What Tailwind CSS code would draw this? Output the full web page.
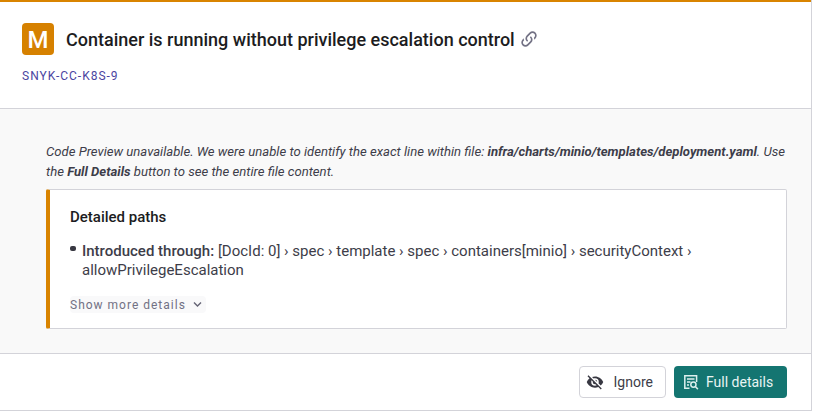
<!DOCTYPE html>
<html lang="en">
<head>
<meta charset="utf-8">
<title>Issue details</title>
<script src="https://cdn.jsdelivr.net/npm/@tailwindcss/browser@4"></script>
</head>
<body class="bg-white font-['Roboto',sans-serif] text-[#3d3d49] antialiased">
<article class="flex h-[411px] w-[812px] flex-col border-r border-b border-[#d3d3d9]">
  <header class="h-[109px] border-t-2 border-b border-t-[#d98400] border-b-[#d3d3d9] pt-[21px] pl-[22px]">
    <div class="flex h-8 items-center">
      <span class="flex size-8 items-center justify-center rounded bg-[#d68100] pt-0.5 text-[24px] leading-8 font-medium text-white">M</span>
      <h1 class="ml-3 pt-0.5 text-[18px] leading-8 font-medium whitespace-nowrap text-[#1c1c21]">Container is running without privilege escalation control</h1>
      <svg class="ml-[4px] size-5" viewBox="0 0 24 24" fill="#727184"><path d="M10.59,13.41C11,13.8 11,14.44 10.59,14.83C10.2,15.22 9.56,15.22 9.17,14.83C7.22,12.88 7.22,9.71 9.17,7.76V7.76L12.71,4.22C14.66,2.27 17.83,2.27 19.78,4.22C21.73,6.17 21.73,9.34 19.78,11.29L18.29,12.78C18.3,11.96 18.17,11.14 17.89,10.36L18.36,9.88C19.54,8.71 19.54,6.81 18.36,5.64C17.19,4.46 15.29,4.46 14.12,5.64L10.59,9.17C9.41,10.34 9.41,12.24 10.59,13.41M13.41,9.17C13.8,8.78 14.44,8.78 14.83,9.17C16.78,11.12 16.78,14.29 14.83,16.24V16.24L11.29,19.78C9.34,21.73 6.17,21.73 4.22,19.78C2.27,17.83 2.27,14.66 4.22,12.71L5.71,11.22C5.7,12.04 5.83,12.86 6.11,13.65L5.64,14.12C4.46,15.29 4.46,17.19 5.64,18.36C6.81,19.54 8.71,19.54 9.88,18.36L13.41,14.83C14.59,13.66 14.59,11.76 13.41,10.59C13,10.2 13,9.56 13.41,9.17Z"/></svg>
    </div>
    <a class="mt-[11px] block text-[12px] leading-5 tracking-[1px] text-[#4b45a1]">SNYK-CC-K8S-9</a>
  </header>
  <section class="h-[244px] bg-[#f9f9f9] pt-[33px] pr-6 pl-[46px]">
    <p class="text-[13.12px] leading-5 whitespace-nowrap italic">Code Preview unavailable. We were unable to identify the exact line within file: <b class="font-bold">infra/charts/minio/templates/deployment.yaml</b>. Use<br>the <b class="font-bold">Full Details</b> button to see the entire file content.</p>
    <div class="mt-[7px] h-[140px] rounded-[2px] border border-l-4 border-[#d3d3d9] border-l-[#d98400] bg-white pt-[17px] pl-5">
      <h2 class="text-[15px] leading-5 font-medium text-[#1c1c21]">Detailed paths</h2>
      <ul class="mt-[15px]">
        <li class="flex text-[15px] leading-[19px] whitespace-nowrap">
          <span class="mt-[4px] mr-1.5 h-[5px] w-1.5 rounded-[2px] bg-[#383842]"></span>
          <span><b class="font-medium">Introduced through:</b> [DocId: 0] › spec › template › spec › containers[minio] › securityContext ›<br>allowPrivilegeEscalation</span>
        </li>
      </ul>
      <button class="mt-4 flex h-[17px] w-[136px] items-center rounded bg-[#f9f9fa] text-[12px] leading-[17px] tracking-[1px] whitespace-nowrap text-[#727184]"><span class="pt-0.5">Show more details</span><svg class="ml-[7px] size-[9px] shrink-0" viewBox="0 0 9 9" fill="none" stroke="#646374" stroke-width="1.4"><path d="M1 2.5 4.5 6 8 2.5"/></svg></button>
    </div>
  </section>
  <footer class="flex flex-1 items-start justify-end gap-2 border-t border-[#d3d3d9] pt-3 pr-6">
    <button class="flex h-8 w-[87px] items-center rounded border border-[#d3d3d9] bg-white pl-[6px] text-[14px]">
      <svg class="size-[18px]" viewBox="0 0 24 24" fill="#383842"><path d="M11.83,9L15,12.16C15,12.11 15,12.05 15,12A3,3 0 0,0 12,9C11.94,9 11.89,9 11.83,9M7.53,9.8L9.08,11.35C9.03,11.56 9,11.77 9,12A3,3 0 0,0 12,15C12.22,15 12.44,14.97 12.65,14.92L14.2,16.47C13.53,16.8 12.79,17 12,17A5,5 0 0,1 7,12C7,11.21 7.2,10.47 7.53,9.8M2,4.27L4.28,6.55L4.73,7C3.08,8.3 1.78,10 1,12C2.73,16.39 7,19.5 12,19.5C13.55,19.5 15.03,19.2 16.38,18.66L16.81,19.08L19.73,22L21,20.73L3.27,3M12,7A5,5 0 0,1 17,12C17,12.64 16.87,13.26 16.64,13.82L19.57,16.75C21.07,15.5 22.27,13.86 23,12C21.27,7.61 17,4.5 12,4.5C10.6,4.5 9.26,4.75 8,5.2L10.17,7.35C10.74,7.13 11.35,7 12,7Z"/></svg>
      <span class="ml-[9.5px]">Ignore</span>
    </button>
    <button class="flex h-8 w-[113px] items-center rounded bg-[#147571] pl-[9px] text-[14px] whitespace-nowrap text-[#e8f4f3]">
      <svg class="size-4" viewBox="0 0 16 16" fill="none" stroke="#dcefee" stroke-width="1.5"><path d="M6.5 14.2H1.8V1.8H13.6V8M4 4.9H11.5M4 8H7.5M4 11H6"/><circle cx="10.4" cy="10.6" r="2.6"/><path d="m12.3 12.5 2.6 2.6"/></svg>
      <span class="ml-[7px]">Full details</span>
    </button>
  </footer>
</article>
</body>
</html>
